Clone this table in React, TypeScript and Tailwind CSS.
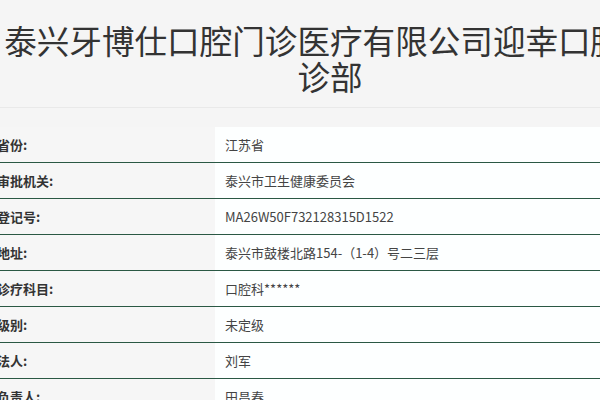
import React from "react";

const rows: [string, string][] = [
  ["省份:", "江苏省"],
  ["审批机关:", "泰兴市卫生健康委员会"],
  ["登记号:", "MA26W50F732128315D1522"],
  ["地址:", "泰兴市鼓楼北路154-（1-4）号二三层"],
  ["诊疗科目:", "口腔科******"],
  ["级别:", "未定级"],
  ["法人:", "刘军"],
  ["负责人:", "田昌春"],
];

export default function App() {
  return (
    <div
      className="w-[600px] h-[400px] overflow-hidden bg-[#f5f5f5] text-[#333]"
      style={{ fontFamily: '"Noto Sans CJK SC", "Noto Sans", sans-serif' }}
    >
      <div className="w-[660px] pt-[22px] pb-[13px] text-center text-[32.6px] leading-[36px] font-normal text-[#333]">
        泰兴牙博仕口腔门诊医疗有限公司迎幸口腔门诊部
      </div>
      <div className="h-px bg-[#e9e9e9]" />
      <div className="mt-[19px]">
        {rows.map(([k, v]) => (
          <div
            key={k}
            className="grid grid-cols-[215px_1fr] h-[36px] border-b border-[#2a5844]"
          >
            <div className="flex items-center bg-[#f6f6f6]">
              <span className="ml-[-3px] text-[13px] font-semibold text-[#333]">{k}</span>
            </div>
            <div className="flex items-center bg-[#fdffff] pl-[10px] text-[13px] text-[#444]">
              {v}
            </div>
          </div>
        ))}
      </div>
    </div>
  );
}
